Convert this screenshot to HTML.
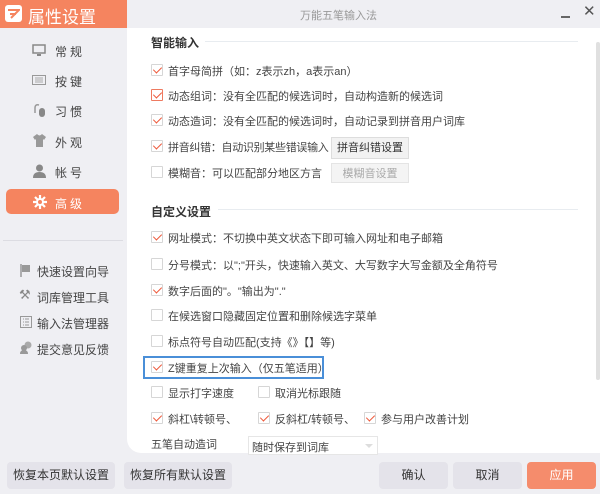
<!DOCTYPE html>
<html><head><meta charset="utf-8"><style>
*{margin:0;padding:0;box-sizing:border-box}
body{width:600px;height:494px;overflow:hidden;background:#efeff3;font-family:"Liberation Sans","Noto Sans CJK SC",sans-serif;font-size:11px;color:#333;position:relative}
.a{position:absolute;white-space:nowrap}
#hdr{left:0;top:0;width:127px;height:28px;background:#f5845f;color:#fff;font-size:17px}
#main{left:127px;top:28px;width:473px;height:425px;background:#fff;border-bottom-left-radius:14px}
.nav{font-size:12px;color:#444;letter-spacing:3px}
.cb{position:absolute;width:12px;height:12px;border:1px solid #d6d6d6;background:#fff;border-radius:1px}
.cb.on::after{content:"";position:absolute;left:3px;top:0px;width:4px;height:7px;border:solid #ee5a3c;border-width:0 1.5px 1.5px 0;transform:rotate(45deg)}
.t{position:absolute;font-size:11px;color:#444;white-space:nowrap}
.h{position:absolute;font-size:12px;font-weight:bold;color:#333}
.line{position:absolute;height:1px;background:#e8ecf0}
.btn{position:absolute;background:#e4e3ea;border-radius:4px;text-align:center;font-size:12px;color:#333;line-height:27px}
.sb{position:absolute;background:#f2f2f2;border:1px solid #ddd;font-size:11px;text-align:center;line-height:20px;color:#333}
</style></head><body>
<div id="hdr" class="a">
 <div class="a" style="left:5px;top:5px;width:17px;height:17px;background:#fff;border-radius:3px"></div>
 <svg class="a" style="left:7px;top:8px" width="13" height="11" viewBox="0 0 13 11"><path d="M1 2H12L4 10M3 6H9" stroke="#f5845f" stroke-width="2" fill="none"/></svg>
 <span class="a" style="left:28px;top:3px">属性设置</span>
</div>
<div class="a" style="left:300px;top:7px;color:#999;font-size:11px">万能五笔输入法</div>
<div class="a" style="left:561px;top:16px;width:9px;height:2px;background:#666"></div>
<div class="a" style="left:583px;top:2px;font-size:15px;color:#555">✕</div>

<!-- sidebar -->
<svg class="a" style="left:32px;top:44px" width="14" height="13"><rect x="1" y="1" width="12" height="8" fill="none" stroke="#888" stroke-width="1.5"/><rect x="5" y="10" width="4" height="2" fill="#888"/></svg>
<div class="a nav" style="left:55px;top:43px">常规</div>
<svg class="a" style="left:32px;top:74px" width="14" height="12"><rect x="0.5" y="1.5" width="13" height="9" fill="none" stroke="#999"/><path d="M3 4h8M3 6h8M3 8h8" stroke="#aaa"/></svg>
<div class="a nav" style="left:55px;top:73px">按键</div>
<svg class="a" style="left:33px;top:103px" width="13" height="14"><path d="M2 10V5Q2 1 6 2" stroke="#999" stroke-width="1.5" fill="none"/><rect x="6" y="5" width="6" height="9" rx="3" fill="#888"/></svg>
<div class="a nav" style="left:55px;top:103px">习惯</div>
<svg class="a" style="left:33px;top:134px" width="13" height="13"><path d="M4 0L0 3L2 6L3 5V13H10V5L11 6L13 3L9 0Q6.5 3 4 0Z" fill="#999"/></svg>
<div class="a nav" style="left:55px;top:134px">外观</div>
<svg class="a" style="left:33px;top:164px" width="13" height="14"><circle cx="6.5" cy="4" r="3.5" fill="#888"/><path d="M0 14Q0 8 6.5 8Q13 8 13 14Z" fill="#888"/></svg>
<div class="a nav" style="left:55px;top:164px">帐号</div>
<div class="a" style="left:6px;top:189px;width:113px;height:25px;background:#f5845f;border-radius:5px"></div>
<svg class="a" style="left:33px;top:195px" width="14" height="14" viewBox="0 0 14 14"><g stroke="#fff" stroke-width="2.2"><path d="M7 0V14M0 7H14M2 2L12 12M12 2L2 12"/></g><circle cx="7" cy="7" r="4" fill="#fff"/><circle cx="7" cy="7" r="2" fill="#f5845f"/></svg>
<div class="a nav" style="left:55px;top:195px;color:#fff">高级</div>
<div class="a" style="left:3px;top:240px;width:120px;height:1px;background:#dcdce2"></div>
<svg class="a" style="left:20px;top:264px" width="11" height="13"><path d="M1 0V13" stroke="#999" stroke-width="1.5"/><path d="M2 1H10V8H2Z" fill="#999"/></svg>
<div class="a" style="left:37px;top:263px;font-size:12px;color:#444">快速设置向导</div>
<div class="a" style="left:19px;top:287px;font-size:13px;color:#888">⚒</div>
<div class="a" style="left:37px;top:289px;font-size:12px;color:#444">词库管理工具</div>
<svg class="a" style="left:20px;top:316px" width="12" height="12"><rect x="0.5" y="0.5" width="11" height="11" fill="none" stroke="#999"/><path d="M3 3h1M3 6h1M3 9h1M5 3h4M5 6h4M5 9h4" stroke="#999"/></svg>
<div class="a" style="left:37px;top:315px;font-size:12px;color:#444">输入法管理器</div>
<svg class="a" style="left:20px;top:341px" width="13" height="13"><circle cx="8" cy="4" r="3.5" fill="#aaa"/><circle cx="4" cy="7" r="3" fill="#999"/><path d="M0 13Q0 9 4 9Q8 9 8 13Z" fill="#999"/></svg>
<div class="a" style="left:37px;top:341px;font-size:12px;color:#444">提交意见反馈</div>

<div id="main" class="a"></div>
<div class="a" style="left:596px;top:42px;width:4px;height:338px;background:#e0e0e0;border-radius:2px"></div>

<div class="h" style="left:151px;top:34px">智能输入</div>
<div class="line" style="left:205px;top:41px;width:373px"></div>
<div class="cb on" style="left:151px;top:64px"></div><div class="t" style="left:168px;top:63px">首字母简拼（如：z表示zh，a表示an）</div>
<div class="cb on" style="left:151px;top:89px;border-color:#ee7a60"></div><div class="t" style="left:168px;top:88px">动态组词：没有全匹配的候选词时，自动构造新的候选词</div>
<div class="cb on" style="left:151px;top:114px"></div><div class="t" style="left:168px;top:113px">动态造词：没有全匹配的候选词时，自动记录到拼音用户词库</div>
<div class="cb on" style="left:151px;top:140px"></div><div class="t" style="left:168px;top:139px;letter-spacing:-0.3px">拼音纠错：自动识别某些错误输入</div>
<div class="sb" style="left:331px;top:137px;width:78px;height:22px">拼音纠错设置</div>
<div class="cb" style="left:151px;top:166px"></div><div class="t" style="left:168px;top:165px">模糊音：可以匹配部分地区方言</div>
<div class="sb" style="left:331px;top:163px;width:78px;height:20px;color:#aaa;background:#f4f4f4;border-color:#e4e4e4">模糊音设置</div>

<div class="h" style="left:151px;top:203px">自定义设置</div>
<div class="line" style="left:218px;top:209px;width:360px"></div>
<div class="cb on" style="left:151px;top:231px"></div><div class="t" style="left:168px;top:230px">网址模式：不切换中英文状态下即可输入网址和电子邮箱</div>
<div class="cb" style="left:151px;top:258px"></div><div class="t" style="left:168px;top:257px">分号模式：以";"开头，快速输入英文、大写数字大写金额及全角符号</div>
<div class="cb on" style="left:151px;top:284px"></div><div class="t" style="left:168px;top:283px">数字后面的"。"输出为"."</div>
<div class="cb" style="left:151px;top:309px"></div><div class="t" style="left:168px;top:308px">在候选窗口隐藏固定位置和删除候选字菜单</div>
<div class="cb" style="left:151px;top:335px"></div><div class="t" style="left:168px;top:334px">标点符号自动匹配(支持《》【】等)</div>
<div class="a" style="left:143px;top:356px;width:181px;height:23px;border:2px solid #4a8fd8"></div>
<div class="cb on" style="left:151px;top:361px"></div><div class="t" style="left:168px;top:360px">Z键重复上次输入（仅五笔适用）</div>
<div class="cb" style="left:151px;top:386px"></div><div class="t" style="left:168px;top:385px">显示打字速度</div>
<div class="cb" style="left:258px;top:386px"></div><div class="t" style="left:275px;top:385px">取消光标跟随</div>
<div class="cb on" style="left:151px;top:412px"></div><div class="t" style="left:168px;top:411px">斜杠\转顿号、</div>
<div class="cb on" style="left:258px;top:412px"></div><div class="t" style="left:275px;top:411px">反斜杠/转顿号、</div>
<div class="cb on" style="left:364px;top:412px"></div><div class="t" style="left:381px;top:411px">参与用户改善计划</div>
<div class="t" style="left:151px;top:436px">五笔自动造词</div>
<div class="a" style="left:248px;top:436px;width:130px;height:19px;border:1px solid #e6e6e6;background:#fff"></div>
<div class="t" style="left:252px;top:439px">随时保存到词库</div>
<div class="a" style="left:365px;top:444px;width:0;height:0;border:4px solid transparent;border-top-color:#ddd"></div>

<div class="btn" style="left:7px;top:462px;width:108px;height:27px">恢复本页默认设置</div>
<div class="btn" style="left:124px;top:462px;width:108px;height:27px">恢复所有默认设置</div>
<div class="btn" style="left:379px;top:462px;width:69px;height:27px">确认</div>
<div class="btn" style="left:453px;top:462px;width:69px;height:27px">取消</div>
<div class="btn" style="left:527px;top:462px;width:69px;height:27px;background:#f58c6c;color:#fff">应用</div>
</body></html>
